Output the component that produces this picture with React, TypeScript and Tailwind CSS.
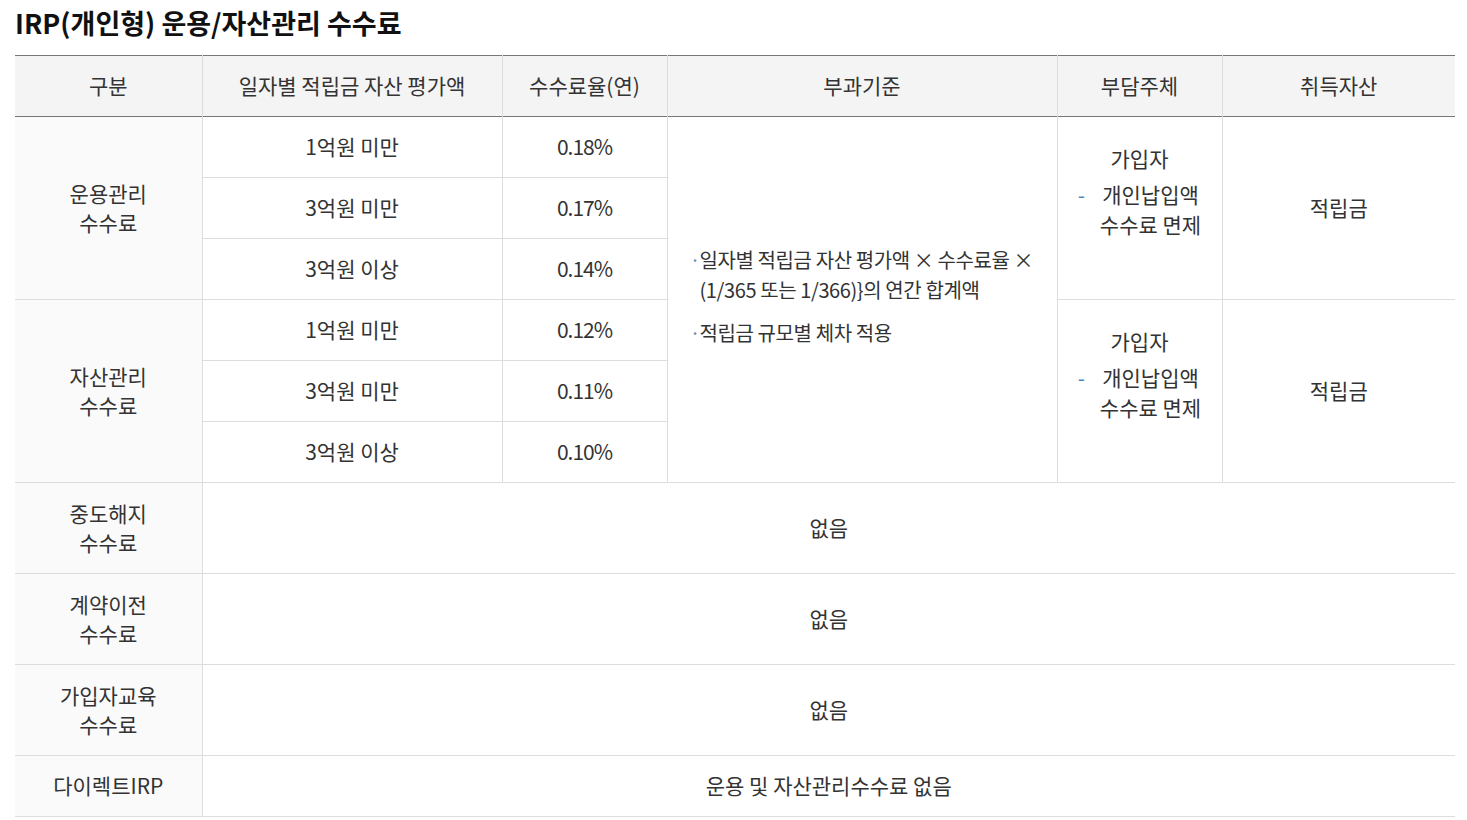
const font = { fontFamily: '"Noto Sans CJK KR", "Noto Sans", sans-serif' };

const headers = [
  { label: "구분", w: "w-[187px]" },
  { label: "일자별 적립금 자산 평가액", w: "w-[300px]" },
  { label: "수수료율(연)", w: "w-[165px]" },
  { label: "부과기준", w: "w-[390px]" },
  { label: "부담주체", w: "w-[165px]" },
  { label: "취득자산", w: "w-[233px]" },
];

const groups = [
  {
    name: ["운용관리", "수수료"],
    rows: [
      ["1억원 미만", "0.18%"],
      ["3억원 미만", "0.17%"],
      ["3억원 이상", "0.14%"],
    ],
  },
  {
    name: ["자산관리", "수수료"],
    rows: [
      ["1억원 미만", "0.12%"],
      ["3억원 미만", "0.11%"],
      ["3억원 이상", "0.10%"],
    ],
  },
];

const extras = [
  { name: ["중도해지", "수수료"], value: "없음" },
  { name: ["계약이전", "수수료"], value: "없음" },
  { name: ["가입자교육", "수수료"], value: "없음" },
];

function Payer() {
  return (
    <td rowSpan={3} className="border-l border-b border-[#dddddd] align-top pt-[26px] text-center">
      <div className="leading-[30px]">가입자</div>
      <div className="mt-[6px] flex justify-center">
        <span className="text-[#4a86c5] w-[22px] text-left">-</span>
        <span className="leading-[30px] text-center whitespace-nowrap">
          개인납입액
          <br />
          수수료 면제
        </span>
      </div>
    </td>
  );
}

export default function App() {
  return (
    <div className="bg-white min-h-screen px-[15px] pt-[5px] text-[#333333] text-[21px]" style={font}>
      <h1 className="text-[27px] font-bold text-[#111111] leading-[36px] mb-[14px]">
        IRP(개인형) 운용/자산관리 수수료
      </h1>
      <table className="w-[1440px] border-collapse table-fixed">
        <thead>
          <tr className="h-[61px] bg-[#f4f4f5] border-t border-t-[#777777] border-b border-b-[#777777]">
            {headers.map((h, i) => (
              <th
                key={h.label}
                className={`${h.w} font-normal text-center ${i > 0 ? "border-l border-[#dddddd]" : ""}`}
              >
                {h.label}
              </th>
            ))}
          </tr>
        </thead>
        <tbody>
          {groups.map((g, gi) =>
            g.rows.map((r, ri) => (
              <tr key={`${gi}-${ri}`} className="h-[61px]">
                {ri === 0 && (
                  <td rowSpan={3} className="bg-[#fafafa] border-b border-[#dddddd] text-center leading-[29px]">
                    {g.name[0]}
                    <br />
                    {g.name[1]}
                  </td>
                )}
                <td className="border-l border-b border-[#dddddd] text-center">{r[0]}</td>
                <td className="border-l border-b border-[#dddddd] text-center tracking-[-1px]">{r[1]}</td>
                {gi === 0 && ri === 0 && (
                  <td rowSpan={6} className="border-l border-b border-[#dddddd] align-middle pl-[22px] pr-[4px] text-[20px] tracking-[-0.4px]">
                    <ul className="flex flex-col gap-[13px] leading-[30px] -mt-[6px]">
                      <li className="flex">
                        <span className="text-[#7c8fa5] w-[10px] shrink-0">·</span>
                        <span className="whitespace-nowrap">
                          일자별 적립금 자산 평가액 × 수수료율 ×
                          <br />
                          (1/365 또는 1/366)&#125;의 연간 합계액
                        </span>
                      </li>
                      <li className="flex">
                        <span className="text-[#7c8fa5] w-[10px] shrink-0">·</span>
                        <span>적립금 규모별 체차 적용</span>
                      </li>
                    </ul>
                  </td>
                )}
                {ri === 0 && <Payer />}
                {ri === 0 && (
                  <td rowSpan={3} className="border-l border-b border-[#dddddd] text-center">
                    적립금
                  </td>
                )}
              </tr>
            ))
          )}
          {extras.map((e, i) => (
            <tr key={i} className="h-[91px]">
              <td className="bg-[#fafafa] border-b border-[#dddddd] text-center leading-[29px]">
                {e.name[0]}
                <br />
                {e.name[1]}
              </td>
              <td colSpan={5} className="border-l border-b border-[#dddddd] text-center">
                {e.value}
              </td>
            </tr>
          ))}
          <tr className="h-[61px]">
            <td className="bg-[#fafafa] border-b border-[#dddddd] text-center">다이렉트IRP</td>
            <td colSpan={5} className="border-l border-b border-[#dddddd] text-center">
              운용 및 자산관리수수료 없음
            </td>
          </tr>
        </tbody>
      </table>
    </div>
  );
}
